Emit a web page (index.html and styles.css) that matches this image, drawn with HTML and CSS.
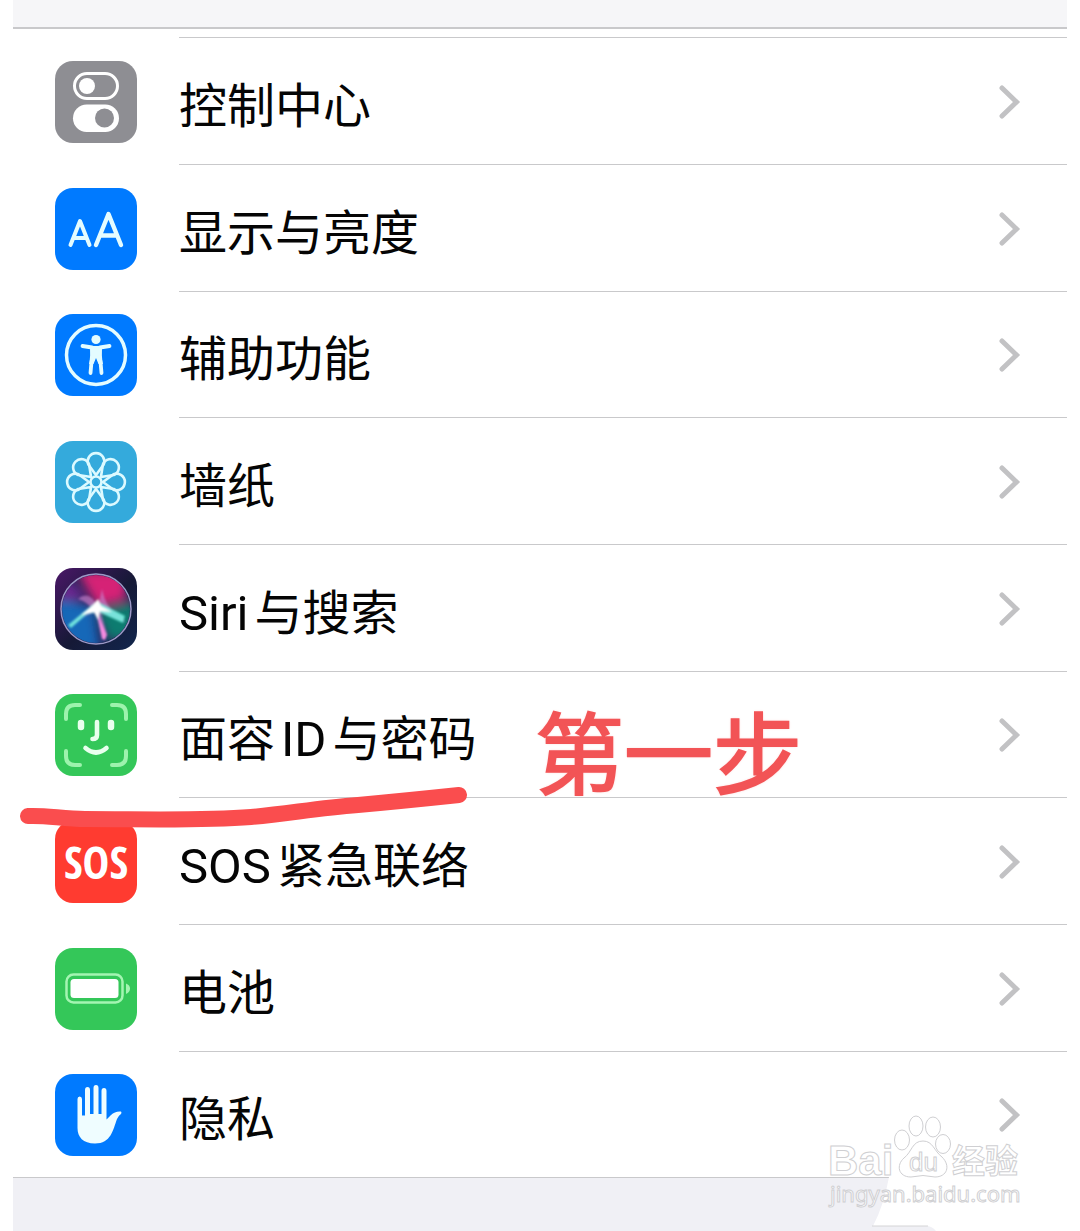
FILE: index.html
```html
<!DOCTYPE html>
<html lang="zh-CN">
<head>
<meta charset="utf-8">
<title>设置</title>
<meta name="viewport" content="width=device-width, initial-scale=1">
<link rel="stylesheet" href="styles.css">
</head>
<body>
<svg class="defs" aria-hidden="true">
  <symbol id="chevron" viewBox="0 0 24 36"><path d="M4 4 18.500 18 4 32" fill="none" stroke="#c2c2c4" stroke-width="5" stroke-linecap="round" stroke-linejoin="miter"/></symbol>
</svg>
<main class="screen">
  <div class="top-bar"></div>
  <ul class="list">
    <li class="item"><a class="row" href="#control">
      <svg class="icon gray" viewBox="0 0 82 82"><rect x="19.500" y="12.500" width="43" height="25" rx="12.500" fill="none" stroke="#fff" stroke-width="3"/><circle cx="32" cy="25" r="8" fill="#fff"/><rect x="18" y="43.500" width="46" height="27.500" rx="13.700" fill="#fff"/><circle cx="49.500" cy="57" r="9.500" fill="#8e8e93"/></svg>
      <span class="label">控制中心</span><svg class="chevron"><use href="#chevron"/></svg></a></li>
    <li class="item"><a class="row" href="#display">
      <svg class="icon blue" viewBox="0 0 82 82"><g fill="none" stroke="#e4fcff" stroke-linecap="round" stroke-linejoin="round"><path d="M15.500 57 25 33 34.500 57M18.500 50h13" stroke-width="4"/><path d="M41 57 53.500 26 66 57M45.500 47.500h16" stroke-width="4.400"/></g></svg>
      <span class="label">显示与亮度</span><svg class="chevron"><use href="#chevron"/></svg></a></li>
    <li class="item"><a class="row" href="#access">
      <svg class="icon blue" viewBox="0 0 82 82"><circle cx="41" cy="41" r="29.500" fill="none" stroke="#e4fcff" stroke-width="3.500"/><circle cx="41" cy="25.500" r="4.600" fill="#e4fcff"/><path d="M27.500 32 37 33.500V42L35.500 59M54.500 32 45 33.500V42L46.500 59" fill="none" stroke="#e4fcff" stroke-width="3.800" stroke-linecap="round" stroke-linejoin="round"/><path d="M35 32H47L46 41 48 50H43.500L41 44 38.500 50H34L36 41Z" fill="#e4fcff"/></svg>
      <span class="label">辅助功能</span><svg class="chevron"><use href="#chevron"/></svg></a></li>
    <li class="item"><a class="row" href="#wallpaper">
      <svg class="icon cyan" viewBox="0 0 82 82"><defs><path id="petal" d="M41 34 33.300 23.500A8.300 8.300 0 1 1 48.700 23.500Z"/></defs><g fill="none" stroke="#dcfaff" stroke-width="2.600" stroke-linejoin="round"><use href="#petal"/><use href="#petal" transform="rotate(45 41 41)"/><use href="#petal" transform="rotate(90 41 41)"/><use href="#petal" transform="rotate(135 41 41)"/><use href="#petal" transform="rotate(180 41 41)"/><use href="#petal" transform="rotate(225 41 41)"/><use href="#petal" transform="rotate(270 41 41)"/><use href="#petal" transform="rotate(315 41 41)"/><circle cx="41" cy="41" r="5.500"/></g></svg>
      <span class="label">墙纸</span><svg class="chevron"><use href="#chevron"/></svg></a></li>
    <li class="item"><a class="row" href="#siri">
      <svg class="icon siri" viewBox="0 0 82 82"><defs>
        <filter id="soft" x="-30%" y="-30%" width="160%" height="160%"><feGaussianBlur stdDeviation="5"/></filter>
        <filter id="glow" x="-30%" y="-30%" width="160%" height="160%"><feGaussianBlur stdDeviation="0.8"/></filter>
        <clipPath id="orb"><circle cx="41" cy="41" r="34"/></clipPath></defs>
        <g clip-path="url(#orb)"><rect width="82" height="82" fill="#29245c"/><g filter="url(#soft)"><path d="M22 3H72L70 32 42 38Z" fill="#d62376"/><path d="M0 28 38 40 45 82H0Z" fill="#1267b8"/><path d="M42 42 80 34V70L54 72Z" fill="#0c7b70"/><path d="M6 5 32 30 5 34Z" fill="#6b2690"/></g>
        <g filter="url(#glow)"><path d="M23 31Q35 21 43 40L47 21Q51 42 67 48L70 54 46 45 52 66 48 72 41 44Q29 47 15 58 27 44 37 40Q30 33 23 31Z" fill="#c77ecb" fill-opacity=".65"/><path d="M13 57 37 37 43 34 70 48 68 55 44 44 32 46 16 60Z" fill="#77f4e3" fill-opacity=".85"/><path d="M41 42 52 67 50 72 47 71Z" fill="#f58be0"/><path d="M26 47 37 38 43 31 46 38 57 44 45 43 43 52 39 44Z" fill="#fff"/></g></g>
        <circle cx="41" cy="41" r="35" fill="none" stroke="#9c98c6" stroke-width="1.500"/></svg>
      <span class="label"><span class="latin lead">Siri</span>与搜索</span><svg class="chevron"><use href="#chevron"/></svg></a></li>
    <li class="item"><a class="row" href="#faceid">
      <svg class="icon green" viewBox="0 0 82 82"><g fill="none" stroke-linecap="round"><path d="M11 25V20Q11 11 20 11H25M57 11H62Q71 11 71 20V25M11 57V62Q11 71 20 71H25M57 71H62Q71 71 71 62V57" stroke="#9df3ad" stroke-width="4"/><path d="M42 28V41Q42 45 37.500 45M30.500 54Q41 63 51.500 54" stroke="#e9ffee" stroke-width="4.600"/><path d="M26 29V33M56 29V33" stroke="#e9ffee" stroke-width="6.500"/></g></svg>
      <span class="label">面容<span class="latin">ID</span>与密码</span><svg class="chevron"><use href="#chevron"/></svg></a></li>
    <li class="item"><a class="row" href="#sos">
      <span class="icon red sos">SOS</span>
      <span class="label"><span class="latin lead">SOS</span>紧急联络</span><svg class="chevron"><use href="#chevron"/></svg></a></li>
    <li class="item"><a class="row" href="#battery">
      <svg class="icon green" viewBox="0 0 82 82"><rect x="11.500" y="26.500" width="56" height="28" rx="7" fill="none" stroke="#a4f5b2" stroke-width="2.500"/><rect x="15.500" y="31" width="48" height="19" rx="3.500" fill="#fff"/><path d="M71 35.500Q75 37 75 40.500T71 46Z" fill="#a4f5b2"/></svg>
      <span class="label">电池</span><svg class="chevron"><use href="#chevron"/></svg></a></li>
    <li class="item"><a class="row" href="#privacy">
      <svg class="icon blue" viewBox="0 0 82 82"><path d="M22.500 54V25Q22.500 22.500 24.700 22.500T27 25V41.500H30V16Q30 13 32.500 13T35 16V40H38.500V14Q38.500 11 41 11T43.500 14V40H46.500V17Q46.500 14 49 14T51.500 17V45.500L56 41Q60 37 66 37.500 67 38.500 66 40 64 41 62 45C58 56 56 69.500 40 69.500 28 69.500 22.500 63 22.500 54Z" fill="#effdff"/></svg>
      <span class="label">隐私</span><svg class="chevron"><use href="#chevron"/></svg></a></li>
  </ul>
  <svg class="underline" viewBox="0 0 450 42" aria-hidden="true"><path d="M9 30C27 29 44 33 66 33C123 33 182 35 232 31C268 28 298 22 339 19Q383 15 440 9" fill="none" stroke="#fa4d4e" stroke-width="16" stroke-linecap="round"/></svg>
  <strong class="step">第一步</strong>
  <svg class="watermark" viewBox="0 0 266 120" aria-label="Baidu 经验">
    <path d="M75 66H266V120H122Q118 115 112 115H59Q70 94 75 66Z" fill="#fff"/>
    <path d="M58 115H114" stroke="#d4d4d6" stroke-width="1"/>
    <g class="mark"><text x="14" y="64" class="brand">Bai</text><ellipse cx="88" cy="29" rx="7.500" ry="10"/><ellipse cx="102" cy="15" rx="7" ry="10"/><ellipse cx="119" cy="16" rx="7.500" ry="10"/><ellipse cx="129" cy="33" rx="7.500" ry="9.500"/><path d="M109 30C119 30 120 40 128 46C137 55 133 66 121 66Q109 63 97 66C84 66 82 54 90 47C98 41 98 30 109 30Z"/><text x="95" y="60" class="du">du</text><text x="138" y="62" class="cn">经验</text><text x="16" y="91" class="site">jingyan.baidu.com</text></g>
  </svg>
</main>
</body>
</html>
```
FILE: styles.css
```css
* { box-sizing: border-box; }
body {
  margin: 0;
  background: #fff;
  color: #050505;
  font-family: Roboto, "Noto Sans CJK SC", sans-serif;
}
.defs { position: absolute; width: 0; height: 0; }
.screen {
  position: relative;
  min-height: 100vh;
  padding: 0 13px;
  display: flex;
  flex-direction: column;
  overflow: hidden;
}
.screen::after { content: ""; flex: 1; min-height: 53px; background: #f0f0f5; }
.top-bar { height: 29px; background: #f6f6f8; border-bottom: 2px solid #c9c9cb; }
.list {
  margin: 0;
  padding: 8px 0 0;
  list-style: none;
  border-bottom: 1px solid #c9c9cb;
}
.item { position: relative; }
.item::before {
  content: "";
  display: block;
  height: 1px;
  margin-left: 166px;
  background: #c9c9cb;
}
.row {
  display: flex;
  align-items: center;
  height: 126px;
  padding: 1px 45px 0 42px;
  color: inherit;
  text-decoration: none;
}
.item:nth-child(3n) .row { height: 125px; }
.icon { flex: none; width: 82px; height: 82px; border-radius: 18px; }
.gray { background: #8e8e93; }
.blue { background: #007aff; }
.cyan { background: #34aadc; }
.green { background: #34c759; }
.red { background: #ff3b30; }
.siri { background: linear-gradient(135deg, #4a1767, #151936 55%, #12264d); }
.sos {
  display: grid;
  place-items: center;
  color: #fff;
  font: 700 45px/80px "Open Sans Condensed", "Roboto Condensed", Roboto, sans-serif;
}
.label { flex: 1; margin-left: 42px; padding-top: 10px; font-size: 48px; line-height: 72px; white-space: nowrap; }
.latin { margin: 0 6px; font-size: 49px; line-height: 1; }
.lead { margin-left: 0; }
.chevron { width: 24px; height: 36px; }
.underline { position: absolute; left: 19px; top: 786px; width: 450px; height: 42px; }
.step {
  position: absolute;
  left: 535px;
  top: 697px;
  color: #f25456;
  font-size: 89px;
  font-weight: 400;
  line-height: 120px;
  -webkit-text-stroke: 2px #f25456;
  text-shadow: 0 0 3px #f5535466;
}
.watermark { position: absolute; right: 0; top: 1111px; width: 266px; height: 120px; }
.mark { fill: #fff; stroke: #cfcfd2; stroke-width: 1px; font-family: "Liberation Sans", "Noto Sans CJK SC", sans-serif; }
.brand { font-size: 42px; font-weight: 700; }
.du { font-size: 26px; }
.cn { font-size: 33px; font-weight: 700; font-family: "Noto Sans CJK SC", sans-serif; }
.site { font-size: 22px; font-family: "Noto Sans", sans-serif; }
```
